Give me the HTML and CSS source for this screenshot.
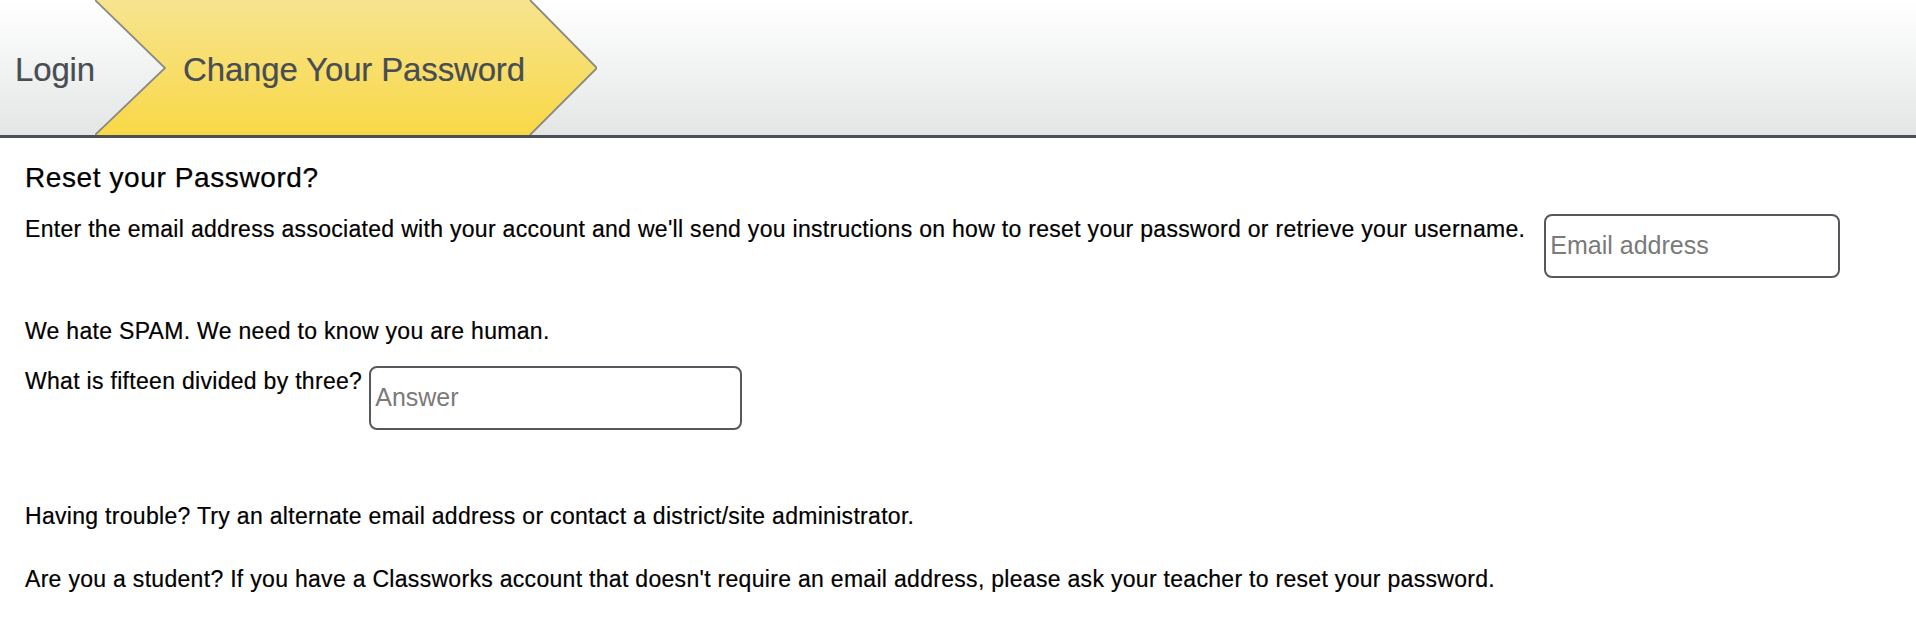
FILE: index.html
```html
<!DOCTYPE html>
<html lang="en">
<head>
<meta charset="utf-8">
<title>Change Your Password</title>
<link rel="stylesheet" href="styles.css">
</head>
<body>
<header class="crumbs">
  <div class="crumb crumb-login">Login</div>
  <div class="crumb crumb-active">
    <svg class="chevron" viewBox="0 0 502 135" preserveAspectRatio="none" aria-hidden="true">
      <defs>
        <linearGradient id="yel" x1="0" y1="0" x2="0" y2="1">
          <stop offset="0" stop-color="#f7e48f"/>
          <stop offset="1" stop-color="#f9d847"/>
        </linearGradient>
      </defs>
      <polygon points="0,0 435,0 502,68 435,135 0,135 70,68" fill="url(#yel)"/>
      <polyline points="0,0 70,68 0,135" fill="none" stroke="#8a8a82" stroke-width="1.8"/>
      <polyline points="435,0 502,68 435,135" fill="none" stroke="#8a8a82" stroke-width="1.8"/>
    </svg>
    <span class="crumb-label">Change Your Password</span>
  </div>
</header>
<main class="content">
  <h2 class="title">Reset your Password?</h2>
  <div class="row row-email">
    <span class="row-text">Enter the email address associated with your account and we'll send you instructions on how to reset your password or retrieve your username.</span>
    <input class="field field-email" type="text" placeholder="Email address">
  </div>
  <p class="line line-spam">We hate SPAM. We need to know you are human.</p>
  <div class="row row-answer">
    <span class="row-text">What is fifteen divided by three?</span>
    <input class="field field-answer" type="text" placeholder="Answer">
  </div>
  <p class="line line-trouble">Having trouble? Try an alternate email address or contact a district/site administrator.</p>
  <p class="line line-student">Are you a student? If you have a Classworks account that doesn't require an email address, please ask your teacher to reset your password.</p>
</main>
</body>
</html>
```
FILE: styles.css
```css
html, body {
  margin: 0;
  padding: 0;
  background: #ffffff;
}
body {
  font-family: "Liberation Sans", Arial, Helvetica, sans-serif;
  color: #000;
}
.crumbs {
  display: flex;
  align-items: center;
  height: 135px;
  border-bottom: 3px solid #4a5056;
  background: linear-gradient(to bottom, #ffffff 0%, #e4e6e6 100%);
  overflow: hidden;
}
.crumb {
  font-size: 33px;
  letter-spacing: -0.15px;
  color: #474d53;
  padding-top: 5px;
  -webkit-text-stroke: 0.2px #474d53;
}
.crumb-login {
  padding-left: 15px;
  width: 80px;
}
.crumb-active {
  position: relative;
  width: 502px;
  height: 135px;
  padding-top: 0;
  display: flex;
  align-items: center;
}
.chevron {
  position: absolute;
  left: 0;
  top: 0;
  width: 502px;
  height: 135px;
}
.crumb-label {
  position: relative;
  padding-left: 88px;
  padding-top: 5px;
}
.content {
  padding: 0 25px;
}
.title {
  margin: 24.3px 0 19.4px;
  font-size: 28px;
  line-height: 32px;
  font-weight: normal;
  letter-spacing: 0.6px;
  -webkit-text-stroke: 0.25px #000;
}
.row {
  display: flex;
  align-items: flex-start;
}
.row-text, .line {
  font-size: 23px;
  line-height: 26px;
  letter-spacing: 0.3px;
  -webkit-text-stroke: 0.2px #000;
}
.row-text {
  padding-top: 2.1px;
}
.line {
  margin: 0;
}
.field {
  box-sizing: border-box;
  height: 64px;
  border: 2px solid #55595e;
  border-radius: 8px;
  padding: 0 4px;
  font-family: "Liberation Sans", Arial, Helvetica, sans-serif;
  font-size: 25px;
  color: #000;
  background: #fff;
  outline: none;
}
.field::placeholder {
  color: #7a7a7a;
  opacity: 1;
}
.field-email {
  width: 296px;
  margin-left: 19px;
}
.field-answer {
  width: 373px;
  margin-left: 7px;
}
.line-spam {
  margin-top: 40.4px;
}
.row-answer {
  margin-top: 21.6px;
}
.line-trouble {
  margin-top: 73.4px;
}
.line-student {
  margin-top: 37px;
}
```
